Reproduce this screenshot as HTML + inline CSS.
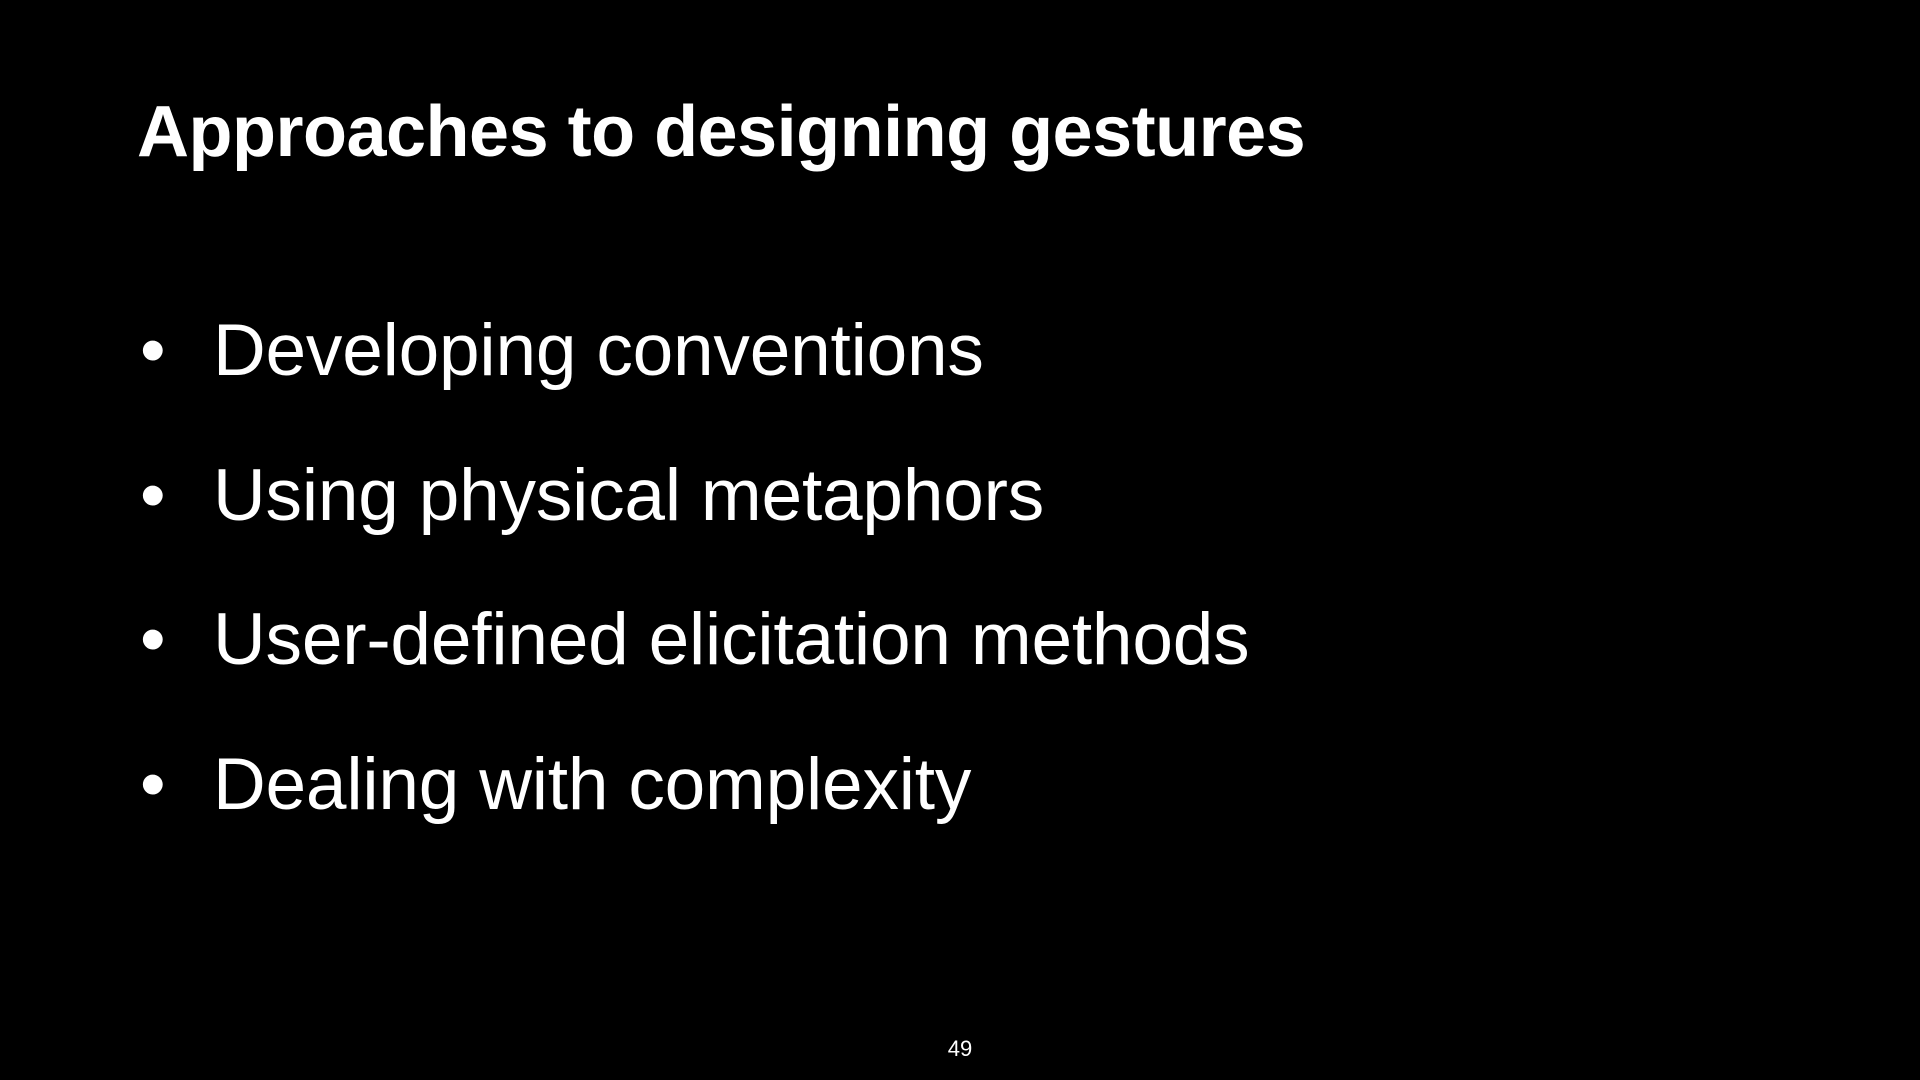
<!DOCTYPE html>
<html><head><meta charset="utf-8"><style>
html,body{margin:0;padding:0;background:#000;}
body{width:1920px;height:1080px;position:relative;overflow:hidden;font-family:"Liberation Sans",Arial,sans-serif;color:#fff;}
.t{position:absolute;left:137px;top:96px;font-size:72px;line-height:1;font-weight:bold;white-space:nowrap;letter-spacing:-0.5px;}
.b{position:absolute;left:213px;font-size:73px;line-height:1;white-space:nowrap;letter-spacing:-0.2px;}
.d{position:absolute;left:140px;font-size:73px;line-height:1;}
.n{position:absolute;left:0;width:1920px;text-align:center;top:1038px;font-size:22px;line-height:1;}
</style></head><body>
<div class="t">Approaches to designing gestures</div>
<div class="d" style="top:314px">•</div><div class="b" style="top:314px">Developing conventions</div>
<div class="d" style="top:459px">•</div><div class="b" style="top:459px">Using physical metaphors</div>
<div class="d" style="top:603px">•</div><div class="b" style="top:603px">User-defined elicitation methods</div>
<div class="d" style="top:748px">•</div><div class="b" style="top:748px">Dealing with complexity</div>
<div class="n">49</div>
</body></html>
